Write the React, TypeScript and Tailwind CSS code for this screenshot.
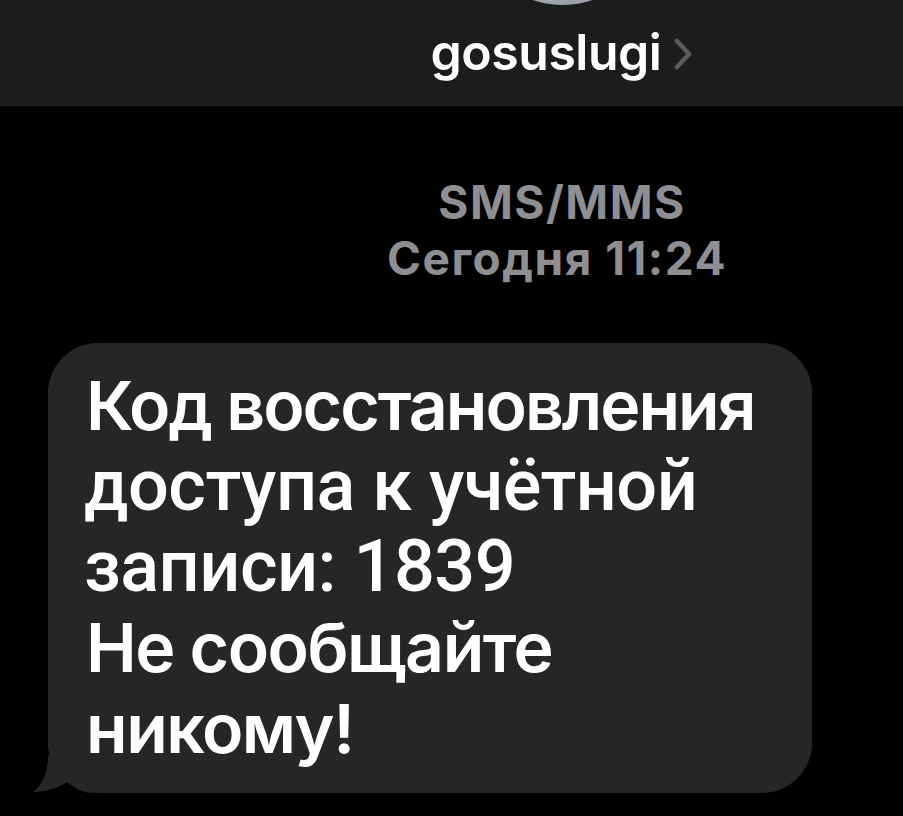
import React from "react";

export default function App() {
  const sf = { fontFamily: "Inter, 'Noto Sans', sans-serif" };
  const rb = { fontFamily: "Roboto, sans-serif" };
  return (
    <div className="w-[903px] h-[816px] bg-black overflow-hidden" style={sf}>
      <div className="w-[1124px] flex flex-col">
        <div className="relative h-[106px] bg-[#1c1c1d] flex items-start justify-center">
          <div className="absolute left-[470px] top-[-180px] w-[185px] h-[185px] rounded-full bg-gradient-to-b from-[#c9ccd3] to-[#9da1ab]" />
          <div className="mt-[22px] flex items-center gap-[12px]">
            <span className="text-[50px] leading-[60px] font-semibold text-white tracking-[-0.5px]">gosuslugi</span>
            <svg width="20" height="32" viewBox="0 0 20 32" className="mt-[4px]">
              <path d="M4 3 L16 16 L4 29" fill="none" stroke="#5b5b60" strokeWidth="4.5" strokeLinecap="round" strokeLinejoin="round" />
            </svg>
          </div>
        </div>
        <div className="flex flex-col items-center mt-[68px] text-[#8e8e93] font-bold text-[46px] leading-[56px] tracking-[1.5px] whitespace-nowrap">
          <span>SMS/MMS</span>
          <span className="-translate-x-[5px]">Сегодня 11:24</span>
        </div>
        <div className="relative ml-[48px] mt-[57px] w-[764px]">
          <div className="bg-[#262629] rounded-[50px] pl-[38px] pr-[20px] pt-[22px] pb-[24px] text-white text-[68px] leading-[80.75px] font-semibold whitespace-nowrap">
            <div className="tracking-[-2px]">Код восстановления</div>
            <div className="font-medium text-[72px] tracking-[-0.5px] -ml-[2px]" style={rb}>доступа к учётной</div>
            <div className="font-medium text-[72px] tracking-[-0.5px] -ml-[2px]" style={rb}>записи: 1839</div>
            <div className="tracking-[-1.5px]">Не сообщайте</div>
            <div className="tracking-[-1.5px]">никому!</div>
          </div>
          <svg className="absolute left-[-20px] bottom-0" width="62" height="38" viewBox="0 0 62 38">
            <path d="M20 0 C20 18 14 30 5 37 C18 37 30 33 39 27 C46 33 54 37 62 38 L62 0 Z" fill="#262629" />
          </svg>
        </div>
      </div>
    </div>
  );
}
